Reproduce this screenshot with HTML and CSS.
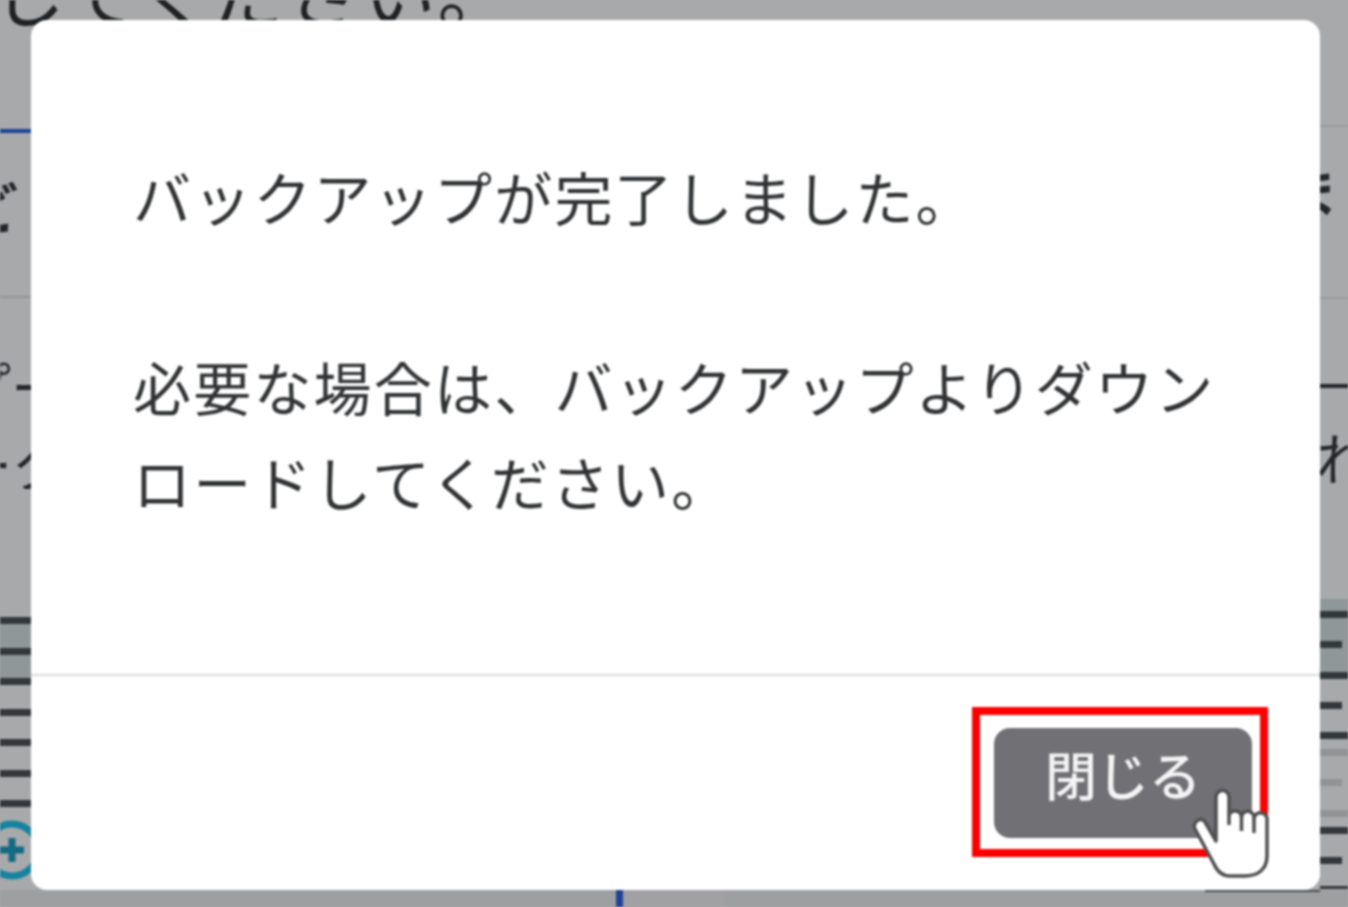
FILE: index.html
```html
<!DOCTYPE html>
<html lang="ja">
<head>
<meta charset="utf-8">
<title>バックアップ</title>
<link rel="stylesheet" href="styles.css">
</head>
<body>
<div class="page">
  <div class="top-strip"><span class="top-text">してください。</span></div>
  <div class="middle">
    <aside class="rail rail-left">
      <div class="blue-line"></div>
      <div class="frag frag-l1"><span>ど</span></div>
      <div class="rule rule-l"></div>
      <div class="frag frag-l2"><span>プー</span></div>
      <div class="frag frag-l3"><span>ータ</span></div>
      <div class="stripes stripes-left">
        <div class="stripe hl"></div>
        <div class="stripe hl"></div>
        <div class="stripe"></div>
        <div class="stripe"></div>
        <div class="stripe"></div>
        <div class="stripe"></div>
        <div class="stripe last"></div>
      </div>
      <div class="add-icon"><svg viewBox="0 0 70 70" width="70" height="70"><circle cx="35" cy="35" r="26" fill="none" stroke="#15839f" stroke-width="7"/><path d="M35 23V47M23 35H47" stroke="#146a83" stroke-width="7" fill="none"/></svg></div>
    </aside>
    <main class="modal">
      <div class="modal-body">
        <p class="msg">バックアップが完了しました。</p>
        <p class="msg">必要な場合は、バックアップよりダウンロードしてください。</p>
      </div>
      <div class="modal-footer">
        <div class="highlight">
          <button class="close-btn" type="button">閉じる</button>
        </div>
      </div>
      <svg class="hand" viewBox="0 0 77 91" width="77" height="91">
        <path d="M24 53V9A6.5 6.5 0 0 1 37 9V27A6.5 6.5 0 0 1 49.5 29A6.2 6.2 0 0 1 62 30A6.5 6.5 0 0 1 75 33V68C75 82 65 88 53 88H38C30 88 25 83 22 76L3 41C0 34 9 28 13 34Z" fill="#fff" stroke="#4f4f51" stroke-width="3.5" stroke-linejoin="round"/>
        <path d="M37 27V37M49.5 29V43M62 30V45" fill="none" stroke="#4f4f51" stroke-width="3.5"/>
      </svg>
    </main>
    <aside class="rail rail-right">
      <div class="rule rule-r1"></div>
      <div class="frag frag-r1"><span>ま</span></div>
      <div class="rule rule-r2"></div>
      <div class="dark-line"></div>
      <div class="frag frag-r2"><span>れ</span></div>
      <div class="stripes stripes-right">
        <div class="hl-top"></div>
        <div class="bar hl h30"></div>
        <div class="bar hl short h31"></div>
        <div class="bar h30"></div>
        <div class="bar short h30"></div>
        <div class="bar h17"></div>
        <div class="bar faint h30"></div>
        <div class="bar faint short h31"></div>
        <div class="bar faint h17"></div>
        <div class="bar h30"></div>
        <div class="bar short h29"></div>
        <div class="bar h3"></div>
      </div>
    </aside>
  </div>
  <div class="bottom-strip">
    <div class="bottom-blue"></div>
    <div class="bottom-band"></div>
    <div class="bottom-dark"></div>
  </div>
</div>
</body>
</html>
```

FILE: styles.css
```css
* { box-sizing: border-box; }
html, body { margin: 0; padding: 0; }
body {
  background: #a8a9ab;
  font-family: "Noto Sans CJK JP", "Noto Sans", sans-serif;
  overflow: hidden;
}
.page {
  width: 1348px;
  height: 907px;
  display: flex;
  flex-direction: column;
  background: #a8a9ab;
  overflow: hidden;
  filter: blur(0.8px);
}
.top-strip {
  height: 20px;
  flex: none;
}
.top-text {
  display: block;
  font-size: 73px;
  letter-spacing: 2px;
  line-height: 73px;
  margin: -46px 0 0 -8px;
  color: #1f2123;
  white-space: nowrap;
}
.middle {
  display: flex;
  height: 870px;
  flex: none;
}
.rail {
  overflow: hidden;
  flex: none;
  display: flex;
  flex-direction: column;
  color: #24262a;
}
.rail-left { width: 31px; }
.rail-right { width: 28px; }

.frag { display: flex; overflow: hidden; white-space: nowrap; flex: none; font-size: 56px; line-height: 60px; height: 60px; }
.rail-left .frag { justify-content: flex-end; }

.blue-line { height: 4px; margin-top: 109px; background: #1f4296; flex: none; }
.frag-l1 { margin-top: 42px; }
.frag-l1 span { margin-right: 13px; font-weight: 700; }
.rule { height: 2px; background: #939496; flex: none; }
.rule-l { margin-top: 61px; }
.frag-l2 { margin-top: 57px; }
.frag-l2 span { margin-right: -36px; }
.frag-l3 { margin-top: 18px; height: 56px; }
.frag-l3 span { margin-right: -37px; }
.stripes { display: flex; flex-direction: column; flex: none; }
.stripes-left { margin-top: 128px; }
.stripe { height: 30.5px; flex: none; border-top: 7px solid #33383b; }
.stripe.hl { background: #8f9799; }
.stripe.last { height: 15px; }
.add-icon { margin-left: -23px; height: 70px; flex: none; }
.add-icon svg { display: block; }

.rule-r1 { margin-top: 105px; background: #9a9b9d; }
.frag-r1 { margin-top: 33px; }
.frag-r1 span { margin-left: -38px; font-weight: 700; }
.rule-r2 { margin-top: 77px; background: #98999b; }
.dark-line { height: 4px; margin-top: 85px; background: #24262a; flex: none; }
.frag-r2 { margin-top: 38px; }
.frag-r2 span { margin-left: -4px; }
.stripes-right { margin-top: 113px; }
.hl-top { height: 12px; background: #8f9799; flex: none; }
.bar {
  flex: none;
  background: linear-gradient(#33383b, #33383b) top left / 100% 7px no-repeat;
}
.bar.hl { background-color: #8f9799; }
.bar.short { background-size: 22px 7px; }
.bar.faint { background-image: linear-gradient(#929395, #929395); }
.h3 { height: 3px; }
.h17 { height: 17px; }
.h29 { height: 29px; }
.h30 { height: 30px; }
.h31 { height: 31px; }

.modal {
  position: relative;
  z-index: 1;
  width: 1289px;
  height: 870px;
  flex: none;
  background: #fff;
  border-radius: 16px;
  display: flex;
  flex-direction: column;
}
.modal-body {
  height: 654px;
  flex: none;
  padding: 129px 98px 0 102px;
}
.msg {
  margin: 0 0 95px;
  font-size: 58px;
  line-height: 95px;
  letter-spacing: 2.2px;
  color: #303234;
}
.modal-footer {
  border-top: 2px solid #dadbdf;
  padding: 31px 52px 0 0;
  display: flex;
  justify-content: flex-end;
}
.highlight {
  width: 296px;
  height: 150px;
  border: 8px solid #ff0000;
  padding: 13px 8px 0 14px;
}
.close-btn {
  display: block;
  width: 258px;
  height: 110px;
  border: 0;
  border-radius: 16px;
  background: #717075;
  color: #f4f4f4;
  font-family: inherit;
  font-size: 52px;
  font-weight: 500;
  line-height: 1;
  padding: 0 0 18px;
}
.hand {
  position: absolute;
  left: 1161px;
  top: 768px;
}
.bottom-strip {
  height: 17px;
  flex: none;
  display: flex;
  padding-left: 616px;
  background: #9e9fa1;
}
.bottom-blue { width: 7px; background: #1f4296; flex: none; }
.bottom-band { width: 102px; background: #a1a1a4; flex: none; }
.bottom-dark { width: 115px; height: 2px; margin-left: 480px; background: #4a4c4e; flex: none; }
```
